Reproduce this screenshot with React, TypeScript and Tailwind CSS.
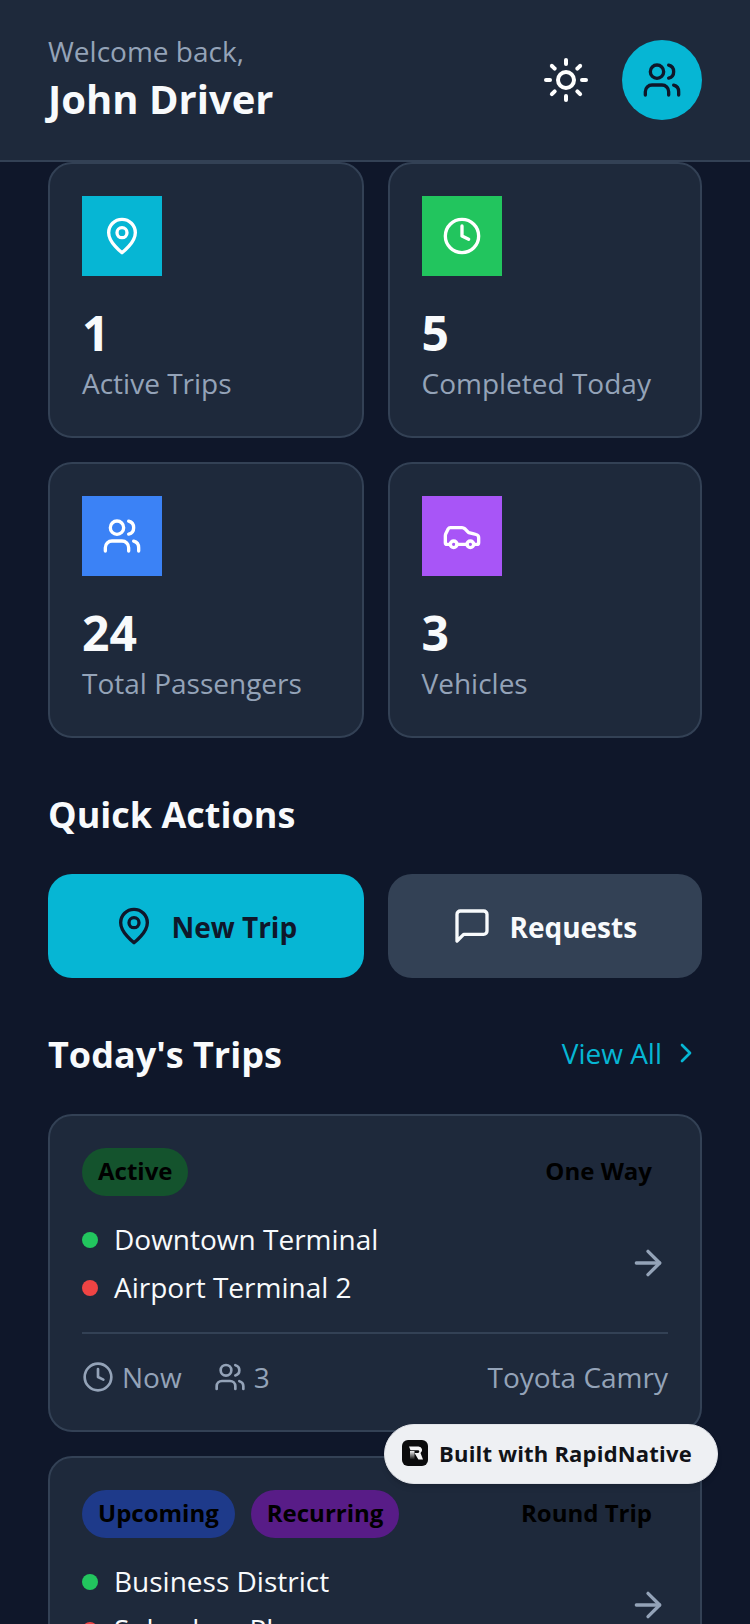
import { ArrowRight, Car, ChevronRight, Clock, Sun, Users } from 'lucide-react';
import type { ReactNode } from 'react';

// older lucide shapes, the package's current ones differ from the picture
function Pin({ size }: { size: number }) {
  return (
    <svg width={size} height={size} viewBox="0 0 24 24" fill="none" stroke="currentColor" strokeWidth="2" strokeLinecap="round" strokeLinejoin="round">
      <path d="M20 10c0 6-8 12-8 12s-8-6-8-12a8 8 0 0 1 16 0Z" />
      <circle cx="12" cy="10" r="3" />
    </svg>
  );
}

function Bubble({ size }: { size: number }) {
  return (
    <svg width={size} height={size} viewBox="0 0 24 24" fill="none" stroke="currentColor" strokeWidth="2" strokeLinecap="round" strokeLinejoin="round">
      <path d="M21 15a2 2 0 0 1-2 2H7l-4 4V5a2 2 0 0 1 2-2h14a2 2 0 0 1 2 2z" />
    </svg>
  );
}

const stats = [
  { value: '1', label: 'Active Trips', tile: 'bg-[#06b6d4]', icon: <Pin size={40} /> },
  { value: '5', label: 'Completed Today', tile: 'bg-[#22c55e]', icon: <Clock size={40} strokeWidth={2} /> },
  { value: '24', label: 'Total Passengers', tile: 'bg-[#3b82f6]', icon: <Users size={40} strokeWidth={2} /> },
  { value: '3', label: 'Vehicles', tile: 'bg-[#a855f7]', icon: <Car size={40} strokeWidth={2} /> },
];

function Pill({ className, children }: { className: string; children: ReactNode }) {
  return (
    <span className={`flex h-12 items-center rounded-full px-4 pb-0.5 text-2xl font-bold text-black ${className}`}>
      {children}
    </span>
  );
}

function Stop({ color, name }: { color: string; name: string }) {
  return (
    <div className="flex h-12 items-center gap-4">
      <span className={`mt-0.5 h-4 w-4 rounded-full ${color}`} />
      <span className="text-[28px] text-[#f8fafc]">{name}</span>
    </div>
  );
}

export default function App() {
  return (
    <div className="relative h-[1624px] w-[750px] overflow-hidden bg-[#0f172a] font-['Open_Sans',sans-serif]">
      {/* Header */}
      <header className="flex h-[162px] items-center justify-between border-b-2 border-[#334155] bg-[#1e293b] px-12">
        <div className="pb-0.5">
          <p className="text-[28px] leading-[36px] text-[#94a3b8]">Welcome back,</p>
          <h1 className="mt-1 text-[40px] leading-[52px] font-bold text-[#f8fafc]">John Driver</h1>
        </div>
        <div className="flex items-center gap-8">
          <Sun size={48} strokeWidth={2} className="text-white" />
          <div className="flex h-20 w-20 items-center justify-center rounded-full bg-[#06b6d4] text-[#0f172a]">
            <Users size={40} strokeWidth={2} />
          </div>
        </div>
      </header>

      <main className="px-12">
        {/* Stats */}
        <div className="grid grid-cols-[315.5px_314.5px] gap-6">
          {stats.map((s) => (
            <div key={s.label} className="h-[276px] rounded-3xl border-2 border-[#334155] bg-[#1e293b] px-8 pt-8">
              <div className={`flex h-20 w-20 items-center justify-center text-white ${s.tile}`}>{s.icon}</div>
              <div className="mt-[22px] text-5xl leading-[69px] font-bold text-[#f8fafc]">{s.value}</div>
              <div className="text-[28px] leading-[32px] text-[#94a3b8]">{s.label}</div>
            </div>
          ))}
        </div>

        {/* Quick actions */}
        <h2 className="mt-[53px] text-[36px] leading-[48px] font-bold text-[#f8fafc]">Quick Actions</h2>
        <div className="mt-[35px] grid grid-cols-[315.5px_314.5px] gap-6">
          <button className="flex h-[104px] items-center justify-center gap-[17px] rounded-3xl bg-[#06b6d4] text-[#0f172a]">
            <Pin size={40} />
            <span className="pt-0.5 text-[28px] font-bold">New Trip</span>
          </button>
          <button className="flex h-[104px] items-center justify-center gap-[17px] rounded-3xl bg-[#334155] text-[#f8fafc]">
            <Bubble size={40} />
            <span className="pt-0.5 text-[28px] font-bold">Requests</span>
          </button>
        </div>

        {/* Trips */}
        <div className="mt-[53px] flex items-center justify-between">
          <h2 className="text-[36px] leading-[48px] font-bold text-[#f8fafc]">Today's Trips</h2>
          <div className="flex items-center gap-2 pb-1 text-[#06b6d4]">
            <span className="text-[28px]">View All</span>
            <ChevronRight size={32} strokeWidth={2} />
          </div>
        </div>

        <div className="mt-[35px] rounded-3xl border-2 border-[#334155] bg-[#1e293b] p-8">
          <div className="flex items-center justify-between pr-4">
            <Pill className="bg-[#14532d]">Active</Pill>
            <span className="pb-0.5 text-2xl font-bold text-black">One Way</span>
          </div>
          <div className="mt-[19px] flex items-center justify-between">
            <div>
              <Stop color="bg-[#22c55e]" name="Downtown Terminal" />
              <Stop color="bg-[#ef4444]" name="Airport Terminal 2" />
            </div>
            <ArrowRight size={40} strokeWidth={2} className="text-[#94a3b8]" />
          </div>
          <div className="mt-[21px] flex items-center justify-between border-t-2 border-[#334155] pt-[22px] text-[28px] text-[#94a3b8]">
            <div className="flex items-center gap-8">
              <div className="flex items-center gap-2">
                <Clock size={32} strokeWidth={2} />
                <span>Now</span>
              </div>
              <div className="flex items-center gap-2">
                <Users size={32} strokeWidth={2} />
                <span>3</span>
              </div>
            </div>
            <span>Toyota Camry</span>
          </div>
        </div>

        <div className="mt-6 rounded-3xl border-2 border-[#334155] bg-[#1e293b] p-8">
          <div className="flex items-center justify-between pr-4">
            <div className="flex gap-4">
              <Pill className="bg-[#1e3a8a]">Upcoming</Pill>
              <Pill className="bg-[#581c87]">Recurring</Pill>
            </div>
            <span className="pb-0.5 text-2xl font-bold text-black">Round Trip</span>
          </div>
          <div className="mt-[19px] flex items-center justify-between">
            <div>
              <Stop color="bg-[#22c55e]" name="Business District" />
              <Stop color="bg-[#ef4444]" name="Suburban Plaza" />
            </div>
            <ArrowRight size={40} strokeWidth={2} className="text-[#94a3b8]" />
          </div>
        </div>
      </main>

      {/* Built with badge */}
      <div className="absolute top-[1424px] left-[384px] flex h-[60px] w-[334px] items-center gap-[11px] rounded-full border border-[#e2e4e9] bg-[#eef0f3] pb-0.5 pl-[17px] shadow-md">
        <svg width="26" height="26" viewBox="0 0 26 26" aria-hidden="true">
          <defs>
            <linearGradient id="stem" x1="0" y1="0" x2="0" y2="1">
              <stop offset="0" stopColor="#f4f4f5" />
              <stop offset="1" stopColor="#1a1a1a" />
            </linearGradient>
          </defs>
          <rect width="26" height="26" rx="6" fill="#0b0b0c" />
          <path d="M8 11h4.5v8H8z" fill="url(#stem)" />
          <path d="M7 6.5h9.5a3.6 3.6 0 0 1 2 6.6L21 19.5h-4.6l-3.9-6.6H16a1.3 1.3 0 0 0 0-2.6H8.5z" fill="#f4f4f5" />
        </svg>
        <span className="text-[22px] font-bold tracking-[0.2px] text-[#111318]">Built with RapidNative</span>
      </div>
    </div>
  );
}
